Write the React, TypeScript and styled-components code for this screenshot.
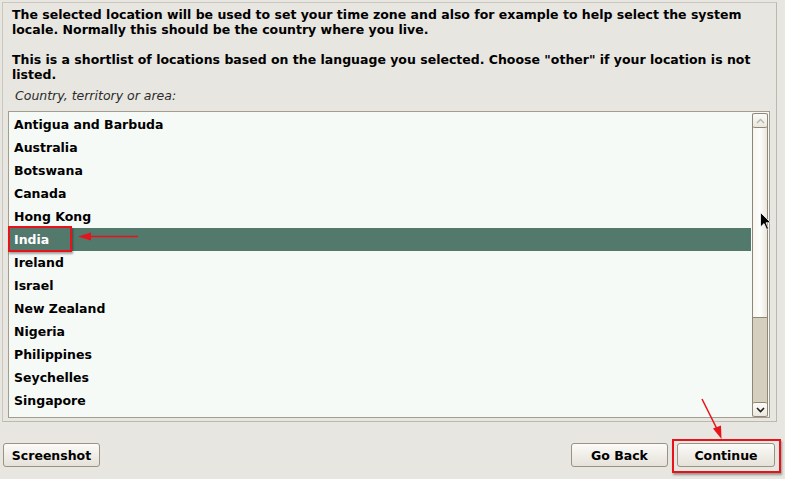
import styled, { createGlobalStyle } from 'styled-components';

const GlobalStyle = createGlobalStyle`
  html, body {
    margin: 0;
    padding: 0;
    background: #e8e6e1;
  }
  body {
    font-family: "DejaVu Sans", "Liberation Sans", sans-serif;
  }
`;

const Screen = styled.div`
  position: relative;
  width: 785px;
  height: 479px;
  overflow: hidden;
  background: #e8e6e1;
  color: #000;
`;

const Panel = styled.div`
  box-sizing: border-box;
  margin: 2px 0 0 2px;
  width: 775px;
  height: 420px;
  border: 1px solid #cbc7bf;
  border-bottom-color: #bdb8ae;
  border-right-color: #bdb8ae;
  padding: 4px 6px 0 5px;
  display: flex;
  flex-direction: column;
`;

const Para = styled.p`
  margin: 0 0 15px 0;
  padding-left: 4px;
  font-size: 12.5px;
  font-weight: bold;
  line-height: 15px;
  white-space: nowrap;
  &:last-of-type {
    margin-bottom: 0;
  }
`;

const FieldLabel = styled.div`
  margin: 6px 0 0 0;
  padding-left: 7px;
  font-size: 12.5px;
  font-style: italic;
  line-height: 15px;
  color: #2b2b2b;
`;

const ListBox = styled.div`
  box-sizing: border-box;
  margin-top: 8px;
  height: 307px;
  border: 1px solid #a49d8f;
  background: #f6faf6;
  display: flex;
  overflow: hidden;
`;

const Rows = styled.ul`
  flex: 1;
  list-style: none;
  margin: 0;
  padding: 1px 0 0 0;
  overflow: hidden;
`;

const Row = styled.li<{ $selected?: boolean }>`
  height: 23px;
  line-height: 23px;
  padding-left: 5px;
  font-size: 12.5px;
  font-weight: bold;
  white-space: nowrap;
  background: ${(p) => (p.$selected ? '#52796c' : 'transparent')};
  color: ${(p) => (p.$selected ? '#ffffff' : '#000000')};
`;

const ScrollBar = styled.div`
  box-sizing: border-box;
  width: 16px;
  margin: 1px 1px 0 1px;
  height: 304px;
  display: flex;
  flex-direction: column;
  background: #d5cfc0;
  border-left: 1px solid #8f8676;
  border-right: 1px solid #8f8676;
  border-radius: 2px;
`;

const ArrowButton = styled.div`
  box-sizing: border-box;
  height: 15px;
  display: flex;
  align-items: center;
  justify-content: center;
  background: linear-gradient(#fbfaf7, #ebe8e1);
  border-top: 1px solid #8f8676;
  border-bottom: 1px solid #8f8676;
  border-radius: 2px;
`;

const Thumb = styled.div`
  box-sizing: border-box;
  height: 190px;
  background: linear-gradient(90deg, #f7f6f2, #fdfdfb 50%, #ebe7df);
  border-bottom: 1px solid #8f8676;
`;

const Trough = styled.div`
  flex: 1;
  background: #d5cfc0;
`;

const Footer = styled.div`
  display: flex;
  justify-content: space-between;
  padding: 21px 10px 0 3px;
`;

const RightButtons = styled.div`
  display: flex;
  gap: 9px;
`;

const Button = styled.button<{ $wide?: boolean }>`
  box-sizing: border-box;
  width: ${(p) => (p.$wide ? '98px' : '97px')};
  height: 24px;
  padding: 0;
  border: 1px solid #9a9283;
  border-radius: 3px;
  background: linear-gradient(#fcfbf9, #eeebe5 60%, #e6e2da);
  font-family: "DejaVu Sans", "Liberation Sans", sans-serif;
  font-size: 12.5px;
  font-weight: bold;
  color: #000;
`;

const RedBox = styled.div<{ $x: number; $y: number; $w: number; $h: number }>`
  position: absolute;
  left: ${(p) => p.$x}px;
  top: ${(p) => p.$y}px;
  width: ${(p) => p.$w}px;
  height: ${(p) => p.$h}px;
  box-sizing: border-box;
  border: 2px solid #e8131a;
  box-shadow: 1px 2px 2px rgba(0, 0, 0, 0.35);
  pointer-events: none;
`;

const Overlay = styled.svg`
  position: absolute;
  left: 0;
  top: 0;
  pointer-events: none;
`;

const countries = [
  'Antigua and Barbuda',
  'Australia',
  'Botswana',
  'Canada',
  'Hong Kong',
  'India',
  'Ireland',
  'Israel',
  'New Zealand',
  'Nigeria',
  'Philippines',
  'Seychelles',
  'Singapore',
];

export default function App() {
  return (
    <Screen>
      <GlobalStyle />
      <Panel>
        <Para>
          The selected location will be used to set your time zone and also for example to help
          select the system
          <br />
          locale. Normally this should be the country where you live.
        </Para>
        <Para>
          This is a shortlist of locations based on the language you selected. Choose "other" if
          your location is not
          <br />
          listed.
        </Para>
        <FieldLabel>Country, territory or area:</FieldLabel>
        <ListBox>
          <Rows>
            {countries.map((c) => (
              <Row key={c} $selected={c === 'India'}>
                {c}
              </Row>
            ))}
          </Rows>
          <ScrollBar>
            <ArrowButton>
              <svg width="9" height="6" viewBox="0 0 9 6">
                <path d="M1 5 L4.5 1.5 L8 5" fill="none" stroke="#b9b4aa" strokeWidth="1.4" />
              </svg>
            </ArrowButton>
            <Thumb />
            <Trough />
            <ArrowButton>
              <svg width="9" height="6" viewBox="0 0 9 6">
                <path d="M1 1 L4.5 4.5 L8 1" fill="none" stroke="#1e1e1e" strokeWidth="1.6" />
              </svg>
            </ArrowButton>
          </ScrollBar>
        </ListBox>
      </Panel>
      <Footer>
        <Button>Screenshot</Button>
        <RightButtons>
          <Button>Go Back</Button>
          <Button $wide>Continue</Button>
        </RightButtons>
      </Footer>

      <RedBox $x={8} $y={226} $w={64} $h={26} />
      <RedBox $x={672} $y={439} $w={109} $h={34} />
      <Overlay width="785" height="479" viewBox="0 0 785 479">
        <line x1="138" y1="236.5" x2="88" y2="236.5" stroke="#e8131a" strokeWidth="1.5" />
        <path d="M78 236.5 L91 232.5 L91 240.5 Z" fill="#e8131a" />
        <line x1="702" y1="399" x2="717" y2="429" stroke="#e8131a" strokeWidth="1.5" />
        <path d="M721.5 439 L713 428.5 L721 425.5 Z" fill="#e8131a" />
        <path
          d="M760.5 212.5 L760.5 227 L764 223.6 L766.6 229.4 L768.6 228.5 L766 222.8 L770.8 222.8 Z"
          fill="#000"
          stroke="#fff"
          strokeWidth="0.8"
        />
      </Overlay>
    </Screen>
  );
}
